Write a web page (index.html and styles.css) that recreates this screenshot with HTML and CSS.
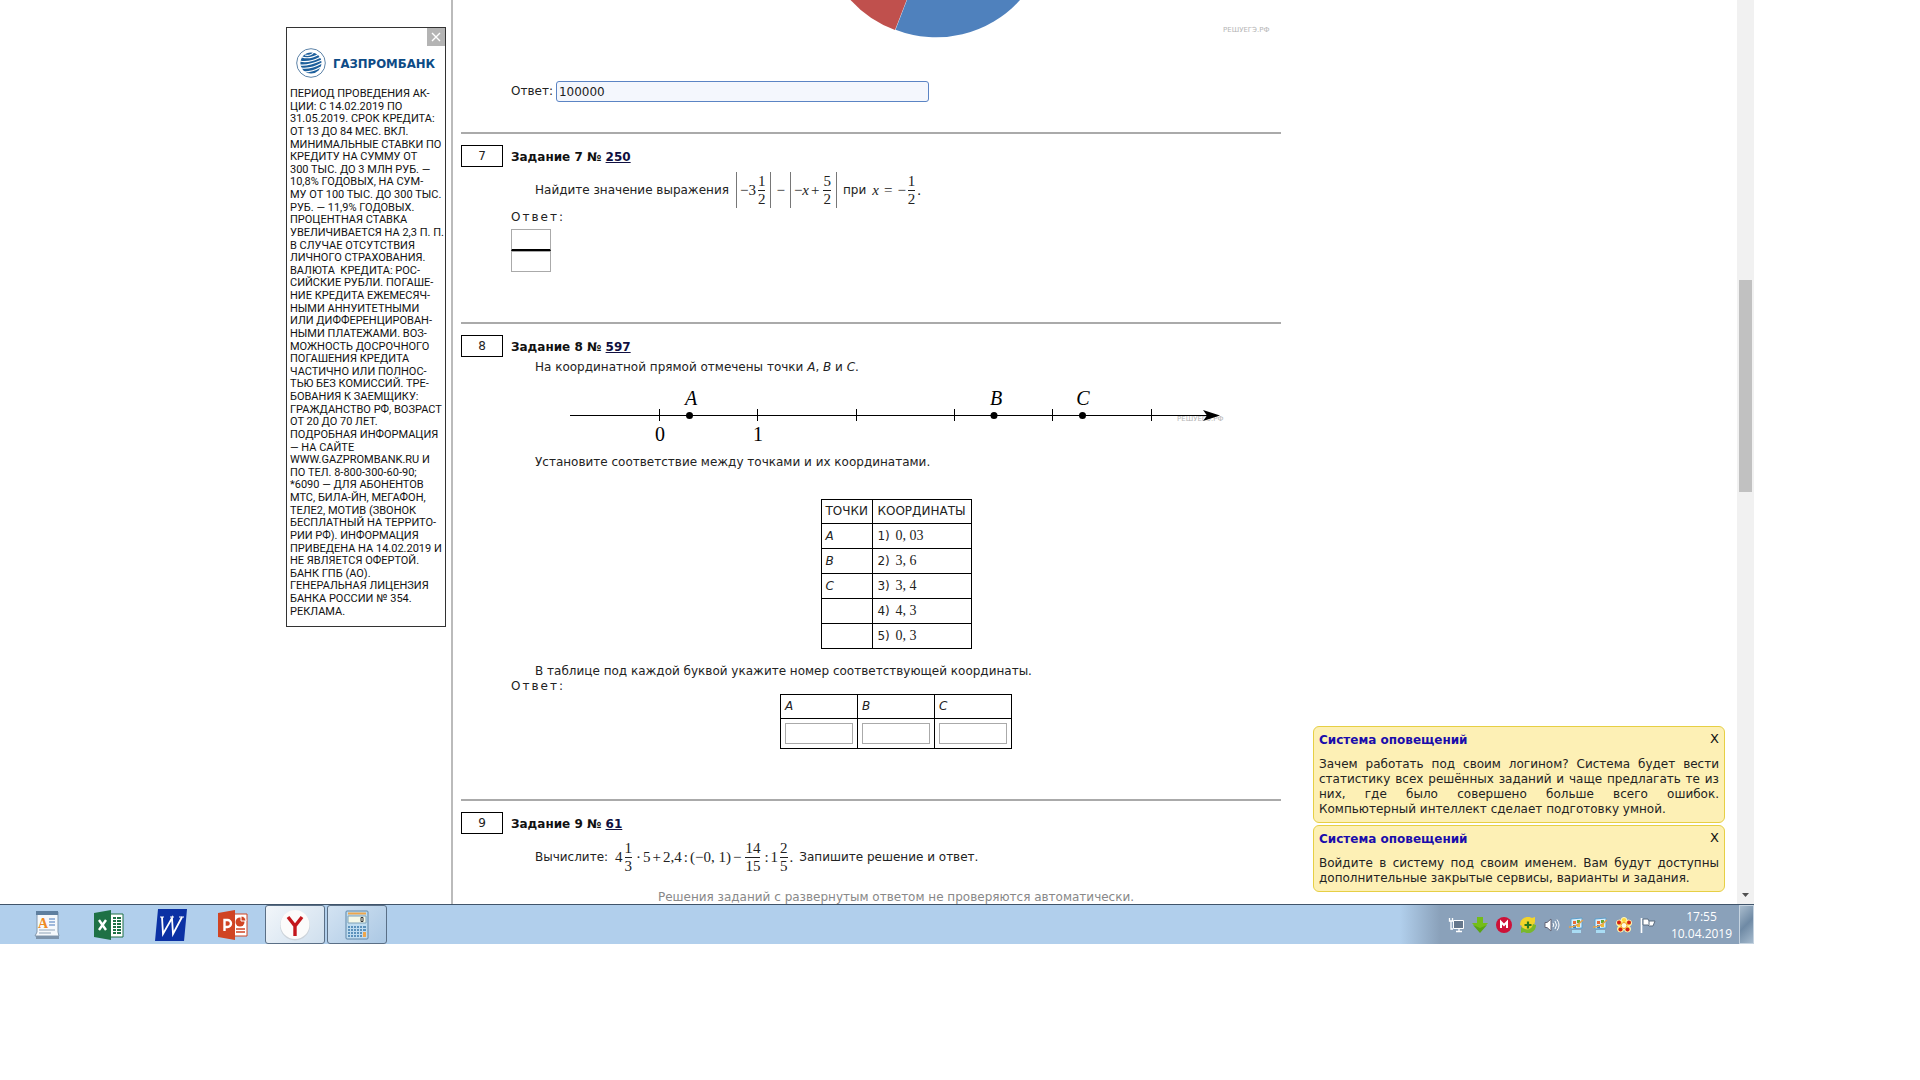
FILE: index.html
```html
<!DOCTYPE html>
<html lang="ru">
<head>
    <meta charset="UTF-8">
    <meta name="viewport" content="width=device-width, initial-scale=1.0">
    <title>Вариант</title>
    <link rel="stylesheet" href="styles.css">
</head>
<body>
    <div class="screen">
        <div class="page">
            <aside class="side">
                <div class="ad">
                    <button type="button" class="ad-close" aria-label="Закрыть">
                        <svg width="10" height="10" viewBox="0 0 10 10"><path d="M1 1l8 8M9 1l-8 8" stroke="#fff" stroke-width="1.4"/></svg>
                    </button>
                    <div class="ad-logo">
                        <svg width="30" height="30" viewBox="0 0 30 30" fill="none">
                            <circle cx="15" cy="15" r="14.3" stroke="#5d83a8"/>
                            <circle cx="15" cy="15" r="10.6" fill="#1d5f9c"/>
                            <g stroke="#fff" stroke-width="1.1">
                                <path d="M6 9c6 2 12 0 17-3"/>
                                <path d="M4 13c7 2 15-1 21-4"/>
                                <path d="M4 17c7 1 15-2 22-5"/>
                                <path d="M5 20c7 1 14-1 21-5"/>
                                <path d="M8 24c6 0 12-2 17-5"/>
                                <path d="M9 7c3 1 7 0 9-3"/>
                            </g>
                        </svg>
                        <b>ГАЗПРОМБАНК</b>
                    </div>
                    <div class="ad-text">
                        <span>ПЕРИОД ПРОВЕДЕНИЯ АК-</span>
                        <span>ЦИИ: С 14.02.2019 ПО</span>
                        <span>31.05.2019. СРОК КРЕДИТА:</span>
                        <span>ОТ 13 ДО 84 МЕС. ВКЛ.</span>
                        <span>МИНИМАЛЬНЫЕ СТАВКИ ПО</span>
                        <span>КРЕДИТУ НА СУММУ ОТ</span>
                        <span>300 ТЫС. ДО 3 МЛН РУБ. —</span>
                        <span>10,8% ГОДОВЫХ, НА СУМ-</span>
                        <span>МУ ОТ 100 ТЫС. ДО 300 ТЫС.</span>
                        <span>РУБ. — 11,9% ГОДОВЫХ.</span>
                        <span>ПРОЦЕНТНАЯ СТАВКА</span>
                        <span>УВЕЛИЧИВАЕТСЯ НА 2,3 П. П.</span>
                        <span>В СЛУЧАЕ ОТСУТСТВИЯ</span>
                        <span>ЛИЧНОГО СТРАХОВАНИЯ.</span>
                        <span>ВАЛЮТА&nbsp; КРЕДИТА: РОС-</span>
                        <span>СИЙСКИЕ РУБЛИ. ПОГАШЕ-</span>
                        <span>НИЕ КРЕДИТА ЕЖЕМЕСЯЧ-</span>
                        <span>НЫМИ АННУИТЕТНЫМИ</span>
                        <span>ИЛИ ДИФФЕРЕНЦИРОВАН-</span>
                        <span>НЫМИ ПЛАТЕЖАМИ. ВОЗ-</span>
                        <span>МОЖНОСТЬ ДОСРОЧНОГО</span>
                        <span>ПОГАШЕНИЯ КРЕДИТА</span>
                        <span>ЧАСТИЧНО ИЛИ ПОЛНОС-</span>
                        <span>ТЬЮ БЕЗ КОМИССИЙ. ТРЕ-</span>
                        <span>БОВАНИЯ К ЗАЕМЩИКУ:</span>
                        <span>ГРАЖДАНСТВО РФ, ВОЗРАСТ</span>
                        <span>ОТ 20 ДО 70 ЛЕТ.</span>
                        <span>ПОДРОБНАЯ ИНФОРМАЦИЯ</span>
                        <span>— НА САЙТЕ</span>
                        <span>WWW.GAZPROMBANK.RU И</span>
                        <span>ПО ТЕЛ. 8-800-300-60-90;</span>
                        <span>*6090 — ДЛЯ АБОНЕНТОВ</span>
                        <span>МТС, БИЛА-ЙН, МЕГАФОН,</span>
                        <span>ТЕЛЕ2, МОТИВ (ЗВОНОК</span>
                        <span>БЕСПЛАТНЫЙ НА ТЕРРИТО-</span>
                        <span>РИИ РФ). ИНФОРМАЦИЯ</span>
                        <span>ПРИВЕДЕНА НА 14.02.2019 И</span>
                        <span>НЕ ЯВЛЯЕТСЯ ОФЕРТОЙ.</span>
                        <span>БАНК ГПБ (АО).</span>
                        <span>ГЕНЕРАЛЬНАЯ ЛИЦЕНЗИЯ</span>
                        <span>БАНКА РОССИИ № 354.</span>
                        <span>РЕКЛАМА.</span>
                    </div>
                </div>
            </aside>

            <main class="content">
                <section class="first">
                    <svg class="pie" width="440" height="40" viewBox="0 0 440 40">
                        <path d="M98-75.500L12.500 0A113 113 0 0 0 57 30z" fill="#c0504d"/>
                        <path d="M98-75.500L57.500 29.800A113 113 0 0 0 182 0z" fill="#4f81bd"/>
                        <text x="385" y="32" class="mark">РЕШУЕГЭ.РФ</text>
                    </svg>
                    <div class="answer-line">
                        <label for="answer6">Ответ:</label>
                        <input type="text" id="answer6" value="100000">
                    </div>
                </section>

                <section class="task">
                    <span class="num">7</span>
                    <h3>Задание 7 № <a href="#250">250</a></h3>
                    <div class="body">
                        <p class="expr">Найдите значение выражения
                            <span class="math first-math">
                                <span class="abs">−3<span class="frac"><span>1</span><span>2</span></span></span>
                                <span class="op">−</span>
                                <span class="abs">−<i>x</i><span class="sign">+</span><span class="frac"><span>5</span><span>2</span></span></span>
                            </span>
                            при
                            <span class="math"><i>x</i><span class="op">=</span>−<span class="frac"><span>1</span><span>2</span></span>.</span>
                        </p>
                        <p class="label">Ответ:</p>
                        <div class="frac-input">
                            <input type="text" aria-label="Числитель">
                            <input type="text" aria-label="Знаменатель">
                        </div>
                    </div>
                </section>

                <section class="task">
                    <span class="num">8</span>
                    <h3>Задание 8 № <a href="#597">597</a></h3>
                    <div class="body">
                        <p>На координатной прямой отмечены точки <i>A</i>, <i>B</i> и <i>C</i>.</p>
                        <svg class="axis" width="660" height="80" viewBox="0 0 660 80">
                            <text x="607" y="46" class="mark">РЕШУЕГЭ.РФ</text>
                            <path d="M0 40.500H640M89.500 34v12M187.500 34v12M286.500 34v12M384.500 34v12M482.500 34v12M581.500 34v12" stroke="#000" fill="none"/>
                            <path d="M633 35l17 5.500-17 5.500 4-5.500z"/>
                            <circle cx="119.500" cy="40.500" r="3.500"/>
                            <circle cx="424" cy="40.500" r="3.500"/>
                            <circle cx="512.500" cy="40.500" r="3.500"/>
                            <g class="points">
                                <text x="121" y="30">A</text>
                                <text x="426" y="30">B</text>
                                <text x="513" y="30">C</text>
                            </g>
                            <g class="ticks">
                                <text x="90" y="66">0</text>
                                <text x="188" y="66">1</text>
                            </g>
                        </svg>
                        <p>Установите соответствие между точками и их координатами.</p>
                        <table class="coords">
                            <tr><th>ТОЧКИ</th><th>КООРДИНАТЫ</th></tr>
                            <tr><td><i>A</i></td><td>1) <span class="val">0, 03</span></td></tr>
                            <tr><td><i>B</i></td><td>2) <span class="val">3, 6</span></td></tr>
                            <tr><td><i>C</i></td><td>3) <span class="val">3, 4</span></td></tr>
                            <tr><td></td><td>4) <span class="val">4, 3</span></td></tr>
                            <tr><td></td><td>5) <span class="val">0, 3</span></td></tr>
                        </table>
                        <p>В таблице под каждой буквой укажите номер соответствующей координаты.</p>
                        <p class="label">Ответ:</p>
                        <table class="reply">
                            <tr>
                                <th><label for="a">A</label></th>
                                <th><label for="b">B</label></th>
                                <th><label for="c">C</label></th>
                            </tr>
                            <tr>
                                <td><input type="text" id="a"></td>
                                <td><input type="text" id="b"></td>
                                <td><input type="text" id="c"></td>
                            </tr>
                        </table>
                    </div>
                </section>

                <section class="task last">
                    <span class="num">9</span>
                    <h3>Задание 9 № <a href="#61">61</a></h3>
                    <div class="body">
                        <p class="expr">Вычислите:
                            <span class="math first-math">4<span class="frac"><span>1</span><span>3</span></span><span class="dot">·</span>5<span class="sign">+</span>2,4<span class="dot">:</span>(−0, 1)<span class="sign">−</span><span class="frac"><span>14</span><span>15</span></span><span class="dot">:</span>1<span class="frac"><span>2</span><span>5</span></span>.</span>
                            Запишите решение и ответ.
                        </p>
                        <p class="note">Решения заданий с развернутым ответом не проверяются автоматически.</p>
                    </div>
                </section>
            </main>

            <div class="scroll">
                <div class="thumb"></div>
                <svg class="arrow" width="7" height="4" viewBox="0 0 7 4"><path d="M0 0h7L3.500 4z" fill="#505050"/></svg>
            </div>

            <div class="notices">
                <div class="notice">
                    <button type="button">X</button>
                    <h4>Система оповещений</h4>
                    <p>Зачем работать под своим логином? Система будет вести статистику всех решённых заданий и чаще предлагать те из них, где было совершено больше всего ошибок. Компьютерный интеллект сделает подготовку умной.</p>
                </div>
                <div class="notice">
                    <button type="button">X</button>
                    <h4>Система оповещений</h4>
                    <p>Войдите в систему под своим именем. Вам будут доступны дополнительные закрытые сервисы, варианты и задания.</p>
                </div>
            </div>
        </div>

        <footer class="taskbar">
            <div class="apps">
                <button type="button" aria-label="WordPad">
                    <svg width="26" height="30" viewBox="0 0 26 30">
                        <path d="M3 2h21v20l1 4H1l2-4z" fill="#f6f9fc" stroke="#8298ae"/>
                        <path d="M2 26h23v3H2z" fill="#7d93aa"/>
                        <path d="M2 1h22v4H2z" fill="#5f7f9f"/>
                        <text x="4" y="18" class="wp">A</text>
                        <path d="M15 9h6M15 12h6M15 15h6" stroke="#4779ba" stroke-width="1.200"/>
                        <path d="M5 20h16M5 23h12" stroke="#8fa3b7"/>
                    </svg>
                </button>
                <button type="button" aria-label="Excel">
                    <svg width="32" height="32" viewBox="0 0 32 32">
                        <path d="M17 5h13v23H17z" fill="#fff" stroke="#1e7145"/>
                        <path d="M20 9h3M24 9h4M20 12h3M24 12h4M20 15h3M24 15h4M20 18h3M24 18h4M20 21h3M24 21h4M20 24h3M24 24h4" stroke="#1e7145" stroke-width="1.800"/>
                        <path d="M1 4l17-3v30L1 28z" fill="#1e7145"/>
                        <path d="M6 11l7 10M13 11L6 21" stroke="#fff" stroke-width="2.400"/>
                    </svg>
                </button>
                <button type="button" aria-label="Word">
                    <svg width="32" height="32" viewBox="0 0 32 32">
                        <path d="M3 0h29l-3 32H0z" fill="#0b31a4"/>
                        <path d="M7 8l1 17L17 9l1 16L27 8" fill="none" stroke="#fff" stroke-width="1.800"/>
                        <path d="M5 8h4M15 8h4M24 8h5" stroke="#fff"/>
                    </svg>
                </button>
                <button type="button" aria-label="PowerPoint">
                    <svg width="32" height="32" viewBox="0 0 32 32">
                        <path d="M17 5h13v22H17z" fill="#fff" stroke="#d04423"/>
                        <circle cx="23" cy="13" r="4.500" fill="#d04423"/>
                        <path d="M24 12V7a5 5 0 0 1 5 5z" fill="#d04423" stroke="#fff"/>
                        <path d="M19 20h9M19 23h9" stroke="#d04423" stroke-width="1.500"/>
                        <path d="M1 4l17-3v30L1 28z" fill="#d04423"/>
                        <path d="M7.500 22V11h3a3 3 0 0 1 0 7h-3" fill="none" stroke="#fff" stroke-width="2.400"/>
                    </svg>
                </button>
                <button type="button" class="open active" aria-label="Yandex">
                    <svg width="32" height="32" viewBox="0 0 32 32">
                        <circle cx="16" cy="16.500" r="15" fill="#ccd3da"/>
                        <circle cx="16" cy="15.500" r="14.500" fill="#fbfbfb"/>
                        <path d="M9 8l7 9 7-9M16 16v11" fill="none" stroke="#c4161c" stroke-width="3.400"/>
                    </svg>
                </button>
                <button type="button" class="open" aria-label="Калькулятор">
                    <svg width="24" height="30" viewBox="0 0 24 30">
                        <rect x="1" y="1" width="22" height="28" rx="1" fill="#bfdcf0" stroke="#5f87a8"/>
                        <path d="M3 3.500h18" stroke="#eda64c" stroke-width="2"/>
                        <path d="M3 6h18v7H3z" fill="#f4f8e8" stroke="#7fa2b8"/>
                        <path d="M16 7.500h2v4h-2z" fill="none" stroke="#333"/>
                        <path d="M3 17h14M3 20h14M3 23h14M3 26h14" stroke="#5b91bb" stroke-width="2" stroke-dasharray="2 1"/>
                        <path d="M18 17h3M18 20h3" stroke="#5b91bb" stroke-width="2"/>
                        <path d="M19.500 22v5" stroke="#eda64c" stroke-width="3"/>
                    </svg>
                </button>
            </div>
            <div class="tray">
                <div class="tray-icons">
                    <svg width="16" height="16" viewBox="0 0 16 16">
                        <path d="M5.500 3.500h10v8h-10z" fill="#66788c" stroke="#fff"/>
                        <path d="M8 14.500h6M11 12v2M1.500 1v3h3V1M3 4v8h2" fill="none" stroke="#fff" stroke-width="1.300"/>
                    </svg>
                    <svg width="16" height="16" viewBox="0 0 16 16"><path d="M5 0h6v6h5l-8 9-8-9h5z" fill="#74bd19"/><path d="M1 8l7 3 7-3-7 8z" fill="#5aa512"/></svg>
                    <svg width="16" height="16" viewBox="0 0 16 16"><circle cx="8" cy="8" r="8" fill="#ce1138"/><path d="M5 11V5l3 3 3-3v6" fill="none" stroke="#fff" stroke-width="2"/></svg>
                    <svg width="16" height="16" viewBox="0 0 16 16">
                        <circle cx="8" cy="8" r="6.500" fill="#f2d42a"/>
                        <path d="M0 8A8 8 0 0 1 12 1l3-1v6l-4-2A6 6 0 0 0 3 9z" fill="#f2d42a"/>
                        <path d="M16 8A8 8 0 0 1 4 15l-3 1v-6l4 2a6 6 0 0 0 8-5z" fill="#79b82c"/>
                        <path d="M8 4.500v7M4.500 8h7" stroke="#28791e" stroke-width="2.200"/>
                    </svg>
                    <svg width="16" height="16" viewBox="0 0 16 16"><path d="M1 5.500h2L7 2v12l-4-3.500H1z" fill="#fff" stroke="#667"/><path d="M9 6q1.500 2 0 4M11 4q3 4 0 8M13 2.500q4 5.500 0 11" fill="none" stroke="#fff"/></svg>
                    <svg width="16" height="16" viewBox="0 0 16 16">
                        <path d="M3 2l11-1v10L3 12z" fill="#d9eefb" stroke="#5aa0cd"/>
                        <path d="M5 4h3v3H5z" fill="#e96b35"/><path d="M9 3h3v3H9z" fill="#69a92f"/><path d="M5 8h3v3H5z" fill="#357ec4"/><path d="M9 7h3v3H9z" fill="#f1bd32"/>
                        <path d="M1 10Q7 11 15 3" fill="none" stroke="#e6a34c" stroke-width="1.500"/><path d="M4 13h9v3H4z" fill="#a9dcf4"/>
                    </svg>
                    <svg width="16" height="16" viewBox="0 0 16 16">
                        <path d="M3 2l11-1v10L3 12z" fill="#d9eefb" stroke="#5aa0cd"/>
                        <path d="M5 4h3v3H5z" fill="#e96b35"/><path d="M9 3h3v3H9z" fill="#69a92f"/><path d="M5 8h3v3H5z" fill="#357ec4"/><path d="M9 7h3v3H9z" fill="#f1bd32"/>
                        <path d="M1 10Q7 11 15 3" fill="none" stroke="#e6a34c" stroke-width="1.500"/><path d="M4 13h9v3H4z" fill="#a9dcf4"/>
                    </svg>
                    <svg width="16" height="16" viewBox="0 0 16 16">
                        <g fill="#ffd93b" stroke="#fff6c0"><circle cx="8" cy="3.500" r="3"/><circle cx="3.500" cy="6" r="3"/><circle cx="12.500" cy="6" r="3"/><circle cx="4.500" cy="12" r="3"/><circle cx="11.500" cy="12" r="3"/></g>
                        <g fill="#d41f18"><circle cx="3" cy="5.500" r="2"/><circle cx="13" cy="5.500" r="2"/><circle cx="4.500" cy="12.500" r="2"/><circle cx="11.500" cy="12.500" r="2"/></g>
                        <circle cx="8" cy="8.500" r="3" fill="#fffbe0" stroke="#f09a1b"/>
                    </svg>
                    <svg width="16" height="16" viewBox="0 0 16 16"><path d="M1.500 1v15" stroke="#fff" stroke-width="1.600"/><path d="M3 2h5l1 2h6l-2 5H9L8 8H3z" fill="#fff" stroke="#5b6c80"/><path d="M9 4v4" stroke="#5b6c80"/></svg>
                </div>
                <div class="clock"><span>17:55</span><span>10.04.2019</span></div>
                <button type="button" class="desktop" aria-label="Свернуть все окна"></button>
            </div>
        </footer>
    </div>
</body>
</html>
```

FILE: styles.css
```css
html, body {
    margin: 0;
    padding: 0;
    background: #fff;
}

* {
    box-sizing: border-box;
}

body {
    padding-right: 166px;
    font-family: Verdana, 'DejaVu Sans', sans-serif;
    font-size: 12px;
    line-height: 15px;
    color: #222;
}

p, h3, h4 {
    margin: 0;
}

input {
    font: inherit;
    color: inherit;
    border: 1px solid #aaa;
    border-radius: 0;
    padding: 0 2px;
    background: #fff;
    outline: none;
}

button {
    font: inherit;
    border: none;
    padding: 0;
    background: none;
    display: flex;
    align-items: center;
    justify-content: center;
}

svg {
    display: block;
}

.page {
    position: relative;
    display: grid;
    grid-template-columns: 451px 1fr 17px;
    overflow: hidden;
}

/* banner */
.side {
    padding: 27px 5px 0 0;
    display: flex;
    justify-content: flex-end;
    align-items: flex-start;
}

.ad {
    position: relative;
    width: 160px;
    height: 600px;
    border: 1px solid #333;
    padding: 20px 0 8px 3px;
    display: flex;
    flex-direction: column;
    gap: 10px;
}

.ad-close {
    position: absolute;
    top: 0;
    right: 0;
    width: 18px;
    height: 18px;
    background: #b4b4b4;
}

.ad-logo {
    display: flex;
    align-items: center;
    gap: 7px;
    padding-left: 6px;
    color: #0d4b86;
    font-family: 'DejaVu Sans Condensed', 'DejaVu Sans', sans-serif;
    font-size: 13px;
}

.ad-text {
    flex: 1;
    display: flex;
    flex-direction: column;
    justify-content: space-between;
    font-family: Roboto, sans-serif;
    font-size: 11px;
    line-height: 12px;
    color: #111;
    white-space: nowrap;
}

/* tasks */
.content {
    border-left: 2px solid #bbb;
    padding-left: 8px;
    padding-right: 456px;
}

.first {
    height: 132px;
}

.pie {
    margin-left: 377px;
}

.mark {
    font-family: 'DejaVu Sans', sans-serif;
    font-size: 7px;
    fill: #b5b5b5;
}

.answer-line {
    display: flex;
    align-items: center;
    gap: 3px;
    padding: 41px 0 0 50px;
}

.answer-line input {
    width: 373px;
    height: 21px;
    border: 1px solid #5b84c4;
    border-radius: 3px;
    background: #f4f7fd;
}

.task {
    display: grid;
    grid-template-columns: 42px 1fr;
    column-gap: 8px;
    align-items: start;
    border-top: 2px solid #aaa;
    padding: 11px 0 50px;
}

.task.last {
    padding-bottom: 0;
}

.num {
    height: 22px;
    line-height: 20px;
    border: 1px solid #000;
    text-align: center;
}

.task h3 {
    font-size: 12px;
    line-height: 24px;
    color: #111;
}

.task h3 a {
    color: #0f0f40;
}

.body {
    grid-column: 2;
    padding-top: 1px;
}

.body p {
    padding-left: 24px;
}

.body .label {
    padding-left: 0;
    letter-spacing: 2px;
}

.body .expr {
    display: flex;
    align-items: center;
    gap: 6px;
    height: 40px;
}

.math {
    display: flex;
    align-items: center;
    font-family: 'Liberation Serif', serif;
    font-size: 15px;
    white-space: pre;
}

.first-math {
    margin-left: 1px;
}

.frac {
    display: flex;
    flex-direction: column;
    text-align: center;
    line-height: 17px;
    margin: 0 2px;
}

.frac span + span {
    border-top: 1px solid #222;
}

.abs {
    display: flex;
    align-items: center;
    height: 36px;
    padding: 0 3px;
    border: solid #777;
    border-width: 0 1px;
}

.op {
    padding: 0 5px;
}

.dot {
    padding: 0 2px;
}

.sign {
    padding: 0 2px;
}

.frac-input {
    display: flex;
    flex-direction: column;
    width: 40px;
    margin-top: 4px;
}

.frac-input input {
    width: 100%;
    height: 21px;
}

.frac-input input:first-child {
    height: 22px;
    border-bottom: 2px solid #000;
}

.axis {
    margin-left: 59px;
}

.points {
    font: italic 20px 'Liberation Serif', serif;
    text-anchor: middle;
}

.ticks {
    font: 20px 'Liberation Serif', serif;
    text-anchor: middle;
}

table {
    border-collapse: collapse;
    margin: 0 auto;
}

th, td {
    border: 1px solid #000;
    padding: 0 4px;
    font-weight: normal;
    text-align: left;
}

th {
    height: 24px;
}

.coords {
    margin-top: 29px;
    margin-bottom: 15px;
    width: 151px;
}

.coords td {
    height: 25px;
}

.val {
    font-family: 'Liberation Serif', serif;
    font-size: 14px;
    padding-left: 2px;
}

.reply th {
    font-style: italic;
}

.reply td {
    height: 30px;
}

.reply input {
    display: block;
    width: 68px;
    height: 21px;
}

.body .note {
    padding: 13px 0 0;
    font-size: 12px;
    color: #888;
    text-align: center;
    height: 27px;
}

/* scrollbar */
.scroll {
    background: #f1f1f1;
    padding: 280px 2px 7px;
    display: flex;
    flex-direction: column;
    align-items: center;
    justify-content: space-between;
}

.thumb {
    width: 100%;
    height: 212px;
    background: #c1c1c1;
}

/* popups */
.notices {
    position: absolute;
    right: 29px;
    bottom: 12px;
    width: 412px;
    display: flex;
    flex-direction: column;
    gap: 2px;
}

.notice {
    position: relative;
    padding: 6px 5px 5px;
    background: #fdf0b5;
    border: 1px solid #e6cf45;
    border-radius: 6px;
}

.notice h4 {
    font-size: 12px;
    color: #1a0dab;
    margin-bottom: 9px;
}

.notice p {
    text-align: justify;
}

.notice button {
    position: absolute;
    top: 4px;
    right: 5px;
    color: #111;
    font-size: 13px;
}

/* taskbar */
.taskbar {
    display: flex;
    justify-content: space-between;
    height: 40px;
    border-top: 1px solid #40546a;
    background: #b1cfec;
}

.apps {
    display: flex;
    gap: 2px;
    padding-left: 17px;
}

.apps button {
    width: 60px;
}

.apps .open {
    border: 1px solid #5a6f86;
    border-radius: 3px;
    background: linear-gradient(135deg, #d3e3f2, #abc8e4);
}

.apps .active {
    background: linear-gradient(135deg, #f2f6fa, #cfdfee);
}

.wp {
    font: bold 14px 'Liberation Serif', serif;
    fill: #ee8a22;
}

.tray {
    display: flex;
    align-items: center;
    padding-left: 48px;
    background: linear-gradient(90deg, #b1cfec, #8aa1ba 40px);
}

.tray-icons {
    display: flex;
    gap: 8px;
    padding-right: 8px;
}

.clock {
    display: flex;
    flex-direction: column;
    align-items: center;
    width: 75px;
    line-height: 17px;
    font-family: 'Open Sans', sans-serif;
    color: #fff;
}

.desktop {
    align-self: stretch;
    width: 15px;
    border: 1px solid #c5d3e0;
    background: linear-gradient(135deg, #a9bccd, #6f8aa5 50%, #a5bacd);
}
```
